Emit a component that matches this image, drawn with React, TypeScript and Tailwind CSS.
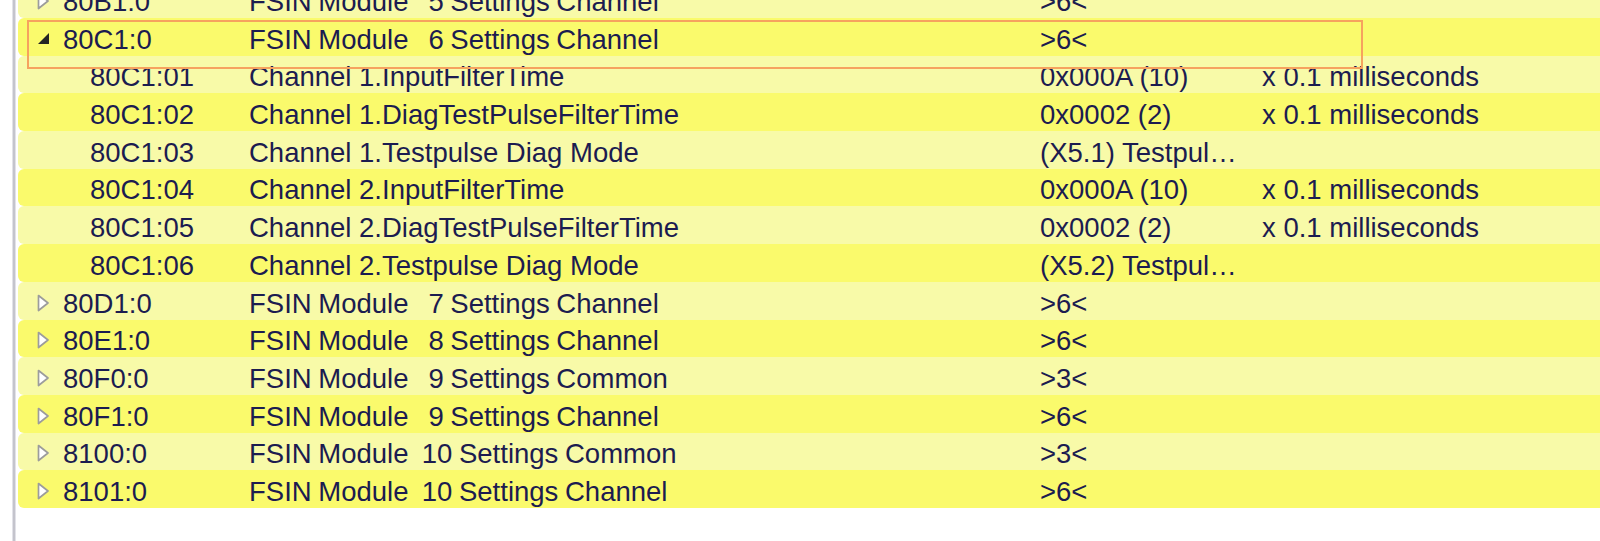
import React from "react";

type Row = {
  id: string;
  name: string;
  value: string;
  unit?: string;
  kind: "collapsed" | "expanded" | "child";
};

const rows: Row[] = [
  { id: "80B1:0", name: "FSIN Module   5 Settings Channel", value: ">6<", kind: "collapsed" },
  { id: "80C1:0", name: "FSIN Module   6 Settings Channel", value: ">6<", kind: "expanded" },
  { id: "80C1:01", name: "Channel 1.InputFilterTime", value: "0x000A (10)", unit: "x 0.1 milliseconds", kind: "child" },
  { id: "80C1:02", name: "Channel 1.DiagTestPulseFilterTime", value: "0x0002 (2)", unit: "x 0.1 milliseconds", kind: "child" },
  { id: "80C1:03", name: "Channel 1.Testpulse Diag Mode", value: "(X5.1) Testpul…", kind: "child" },
  { id: "80C1:04", name: "Channel 2.InputFilterTime", value: "0x000A (10)", unit: "x 0.1 milliseconds", kind: "child" },
  { id: "80C1:05", name: "Channel 2.DiagTestPulseFilterTime", value: "0x0002 (2)", unit: "x 0.1 milliseconds", kind: "child" },
  { id: "80C1:06", name: "Channel 2.Testpulse Diag Mode", value: "(X5.2) Testpul…", kind: "child" },
  { id: "80D1:0", name: "FSIN Module   7 Settings Channel", value: ">6<", kind: "collapsed" },
  { id: "80E1:0", name: "FSIN Module   8 Settings Channel", value: ">6<", kind: "collapsed" },
  { id: "80F0:0", name: "FSIN Module   9 Settings Common", value: ">3<", kind: "collapsed" },
  { id: "80F1:0", name: "FSIN Module   9 Settings Channel", value: ">6<", kind: "collapsed" },
  { id: "8100:0", name: "FSIN Module  10 Settings Common", value: ">3<", kind: "collapsed" },
  { id: "8101:0", name: "FSIN Module  10 Settings Channel", value: ">6<", kind: "collapsed" },
];

function Collapsed() {
  return (
    <svg width="13" height="18" viewBox="0 0 13 18" className="shrink-0">
      <polygon points="1.5,1.5 11,9 1.5,16.5" fill="#ffffff" stroke="#9c9c9c" strokeWidth="1.7" strokeLinejoin="round" />
    </svg>
  );
}

function Expanded() {
  return (
    <svg width="13" height="13" viewBox="0 0 13 13" className="shrink-0">
      <polygon points="12,1 12,12 1,12" fill="#242424" />
    </svg>
  );
}

export default function App() {
  return (
    <div
      className="relative flex w-[1600px] h-[541px] overflow-hidden bg-white text-[27.5px] text-[#1c1c50]"
      style={{ fontFamily: '"Liberation Sans", Arial, sans-serif' }}
    >
      <div className="w-[12px] shrink-0 bg-white" />
      <div className="flex w-[4px] shrink-0 bg-[#e2e2e8]">
        <div className="ml-[1px] w-[2px] bg-[#c4c4cc]" />
      </div>
      <div className="w-[2px] shrink-0 bg-white" />
      <div className="flex flex-1 flex-col mt-[-19.69px]">
        {rows.map((r, i) => (
          <div
            key={r.id}
            className={`flex h-[37.69px] shrink-0 items-center rounded-l-[6px] whitespace-pre ${
              i % 2 === 1 ? "bg-[#fafa6c]" : "bg-[#f8faa8]"
            }`}
          >
            <div className="flex w-[231px] shrink-0 items-center">
              {r.kind === "child" ? (
                <div className="w-[72px] shrink-0" />
              ) : (
                <div className="flex w-[45px] shrink-0 items-center pl-[19px] pt-[4px]">
                  {r.kind === "expanded" ? <Expanded /> : <Collapsed />}
                </div>
              )}
              <span className="pt-[5px]">{r.id}</span>
            </div>
            <div className={`w-[791px] shrink-0 pt-[5px] ${r.kind === "child" ? "" : "[word-spacing:-1px]"}`}>
              {r.name}
            </div>
            <div className="w-[222px] shrink-0 pt-[5px]">{r.value}</div>
            <div className="flex-1 pt-[5px]">{r.unit ?? ""}</div>
          </div>
        ))}
      </div>
      <div className="pointer-events-none absolute left-[27px] top-[20px] h-[49px] w-[1336px] border-2 border-[#f6a25e]" />
    </div>
  );
}
